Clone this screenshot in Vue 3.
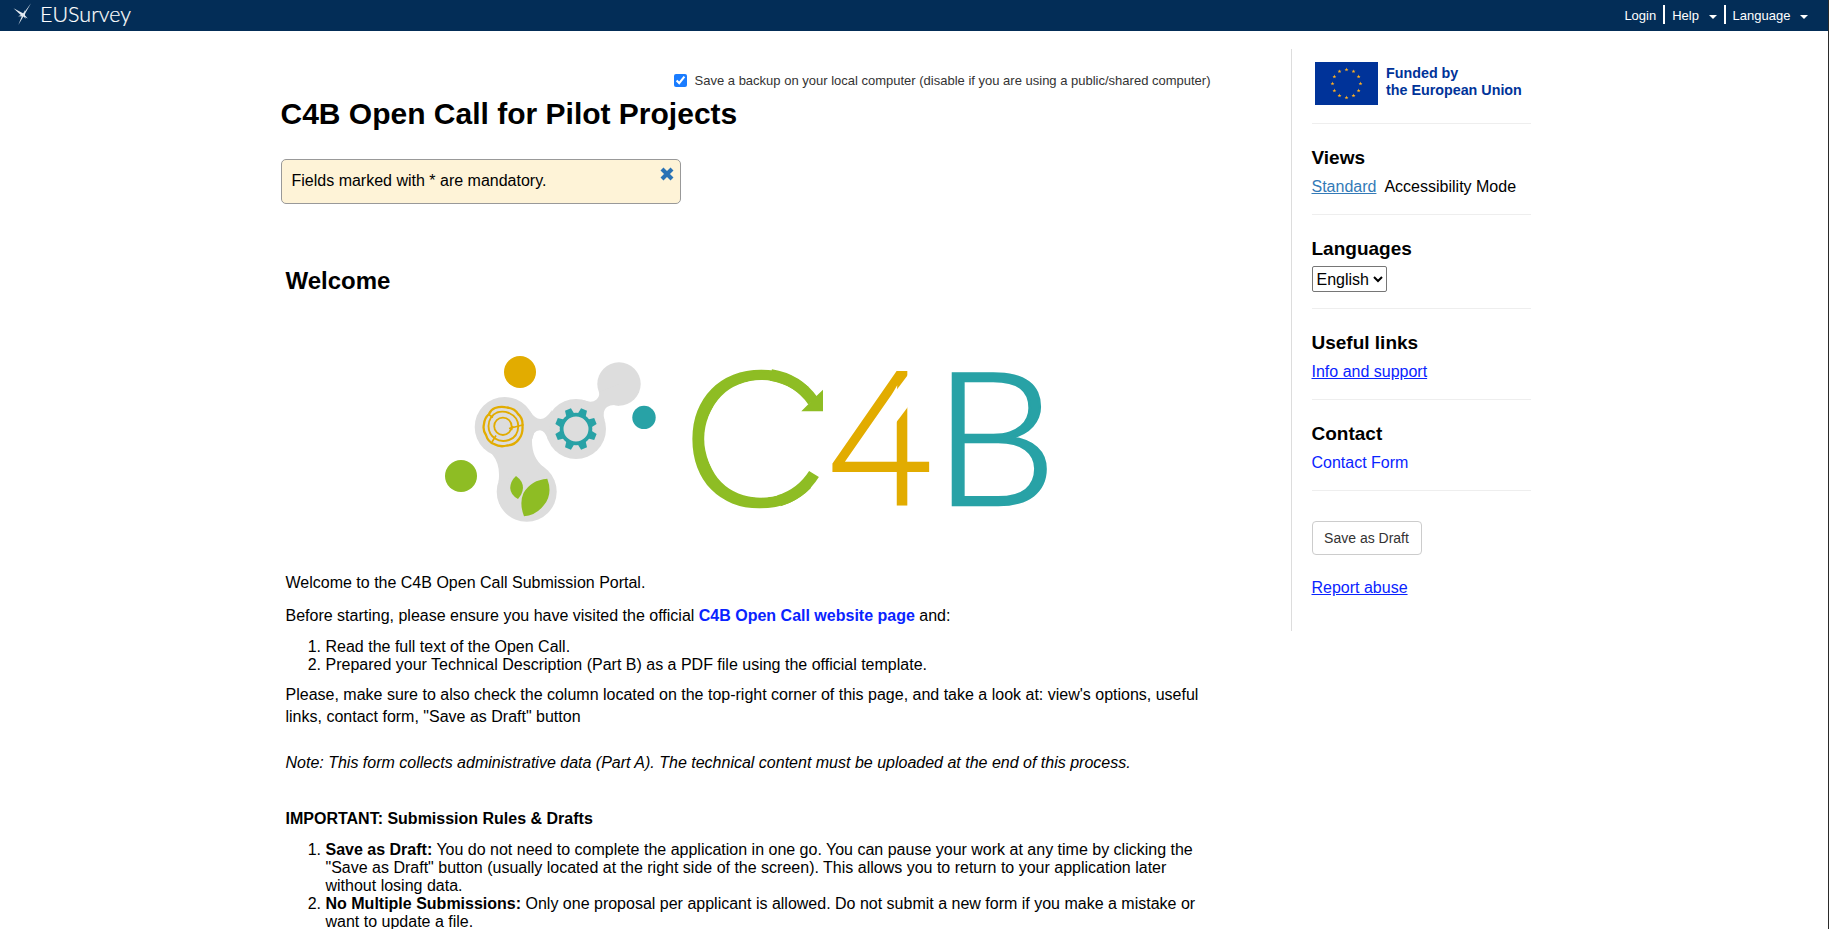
<template>
  <div class="page">
    <header class="topbar">
      <a class="brand">
        <svg class="brand__star" width="20" height="24" viewBox="0 0 20 24">
          <path d="M18 0.300 L10.700 13 L5.300 22 L9.300 12 Z" />
          <path d="M0.500 5.200 L10 10.300 L14.800 15.500 L8 12.300 Z" />
          <path d="M11.700 7 L11.700 11 L12.500 16 L9.800 12 Z" />
          <path d="M5 13.300 L12.500 10.300 L10 13.500 Z" />
        </svg>
        <svg class="brand__name" width="94" height="31" viewBox="0 0 94 31">
          <text x="0" y="22" textLength="91" lengthAdjust="spacingAndGlyphs">EUSurvey</text>
        </svg>
      </a>
      <nav class="topnav">
        <a class="topnav__item">Login</a>
        <a class="topnav__item topnav__item--help">Help <i class="caret"></i></a>
        <a class="topnav__item topnav__item--lang">Language <i class="caret"></i></a>
      </nav>
    </header>

    <div class="layout">
      <main class="survey">
        <label class="backup">
          <input v-model="saveBackup" type="checkbox" />
          <span>Save a backup on your local computer (disable if you are using a public/shared computer)</span>
        </label>
        <h1 class="survey__title">C4B Open Call for Pilot Projects</h1>

        <div v-if="showInfo" class="info">
          <span>Fields marked with * are mandatory.</span>
          <svg class="info__close" width="14" height="14" viewBox="0 0 14 14" @click="showInfo = false">
            <path d="M2 2 L12 12 M12 2 L2 12" />
          </svg>
        </div>

        <section class="section">
          <h2 class="section__title">Welcome</h2>

          <svg class="logo" width="602" height="170" viewBox="0 0 602 170">
            <g fill="#dddddd">
              <circle cx="59.7" cy="73" r="30" />
              <circle cx="131" cy="75" r="30" />
              <circle cx="81.7" cy="137.7" r="30" />
              <circle cx="174" cy="30" r="21.7" />
              <path d="M85 57 Q90 65 95.5 65 Q101 65 107 56 L103 86 Q100 76.5 95 76.3 Q87.5 77 87 86 Q86.500 104 99 113.500 L53.500 128 Q56 111 47 100 Q43 95.500 38 92 L60 73 Z" />
              <path d="M139 46.300 Q147 49.500 151.500 45.500 Q155 42 154 38 L174 30 L174 51.700 Q167 50 162 53 Q157 56.500 159.500 66 L131 75 Z" />
            </g>
            <circle cx="75" cy="18" r="16" fill="#e2ac00" />
            <circle cx="16" cy="122" r="16" fill="#8ebd24" />
            <circle cx="199" cy="63.400" r="11.700" fill="#28a2a6" />
            <!-- wood rings -->
            <g fill="none" stroke="#e2ac00">
              <path stroke-width="2.300" d="M50 54 Q56 52 62 53.500 Q70 54.500 73 60 Q78 64 77.500 72 Q78 80 74 85 Q70 91 62 91.500 Q55 93.500 49 90 Q43 88 41 81 Q37.500 76 39 70 Q39.500 64 44 60 Q46 55.500 50 54 Z" />
              <path stroke-width="1.900" d="M52 58.500 Q58 56.500 64 59 Q73 63 73.300 72 Q73 83 64 86 Q56 88.500 50 84.500 Q43.500 80 43.500 72 Q44 62 52 58.500 Z" />
              <circle cx="57.900" cy="72.300" r="8.700" stroke-width="1.800" />
              <path stroke-width="1.600" d="M64 74.500 L78.500 70.700 M66.500 76 L68 72 M43 60 L48 63.500 M47 88 L51 81.500" />
            </g>
            <!-- gear -->
            <g fill="#28a2a6" transform="translate(131 75)">
              <circle r="14.400" fill="none" stroke="#28a2a6" stroke-width="3.800" />
              <path
                v-for="angle in teeth"
                :key="angle"
                d="M-4.200 -15 L-3.200 -21 H3.200 L4.200 -15 Z"
                :transform="`rotate(${angle})`"
              />
            </g>
            <g fill="#8ebd24">
              <path d="M102.300 124.700 Q108 140 99 151 Q91 161.500 79 162.300 Q74 149 78.500 139 Q86 126 102.300 124.700 Z" />
              <path d="M71 122 Q78 127 78 134 Q77.500 140 73 145 Q65.500 141 65.200 134 Q65.500 127 71 122 Z" />
            </g>
            <g class="logo__letters">
              <text fill="#8ebd24" stroke="#8ebd24" transform="translate(237.200 152.300) scale(1.055 1.008)">C</text>
              <text class="logo__four" fill="#e2ac00" stroke="#e2ac00" transform="translate(384.300 150.700) scale(0.950 0.983)">4</text>
              <text fill="#28a2a6" stroke="#28a2a6" transform="translate(487.500 150.700) scale(1.055 0.990)">B</text>
            </g>
            <!-- slit between the diagonal and the stem -->
            <path fill="#fff" d="M467 15.500 V47.500 L450 70 V38 Z" />
            <!-- arrow: rounded inside, shaft, tail and head -->
            <ellipse cx="316.700" cy="84.700" rx="57.500" ry="58.700" fill="#fff" />
            <path fill="none" stroke="#8ebd24" stroke-width="11.600" d="M326 21.100 A64 64.300 0 0 1 368 47 M334 146.800 A64 64.300 0 0 0 369 120" />
            <path fill="#8ebd24" d="M378 35.700 V57.300 H356.300 L363.300 50.300 L371.700 41.700 Z" />
          </svg>

          <div class="text">
            <p>Welcome to the C4B Open Call Submission Portal.</p>
            <p>Before starting, please ensure you have visited the official <a class="text__link">C4B Open Call website page</a> and:</p>
            <ol>
              <li>Read the full text of the Open Call.</li>
              <li>Prepared your Technical Description (Part B) as a PDF file using the official template.</li>
            </ol>
            <p class="text__hint">Please, make sure to also check the column located on the top-right corner of this page, and take a look at: view's options, useful links, contact form, "Save as Draft" button</p>
            <p class="text__note">Note: This form collects administrative data (Part A). The technical content must be uploaded at the end of this process.</p>
            <p class="text__rules">IMPORTANT: Submission Rules &amp; Drafts</p>
            <ol>
              <li v-for="rule in rules" :key="rule.name"><b>{{ rule.name }}:</b> {{ rule.text }}</li>
            </ol>
          </div>
        </section>
      </main>

      <aside class="side">
        <div class="side__block side__block--eu">
          <svg class="flag" width="63" height="43" viewBox="0 0 63 43">
            <rect width="63" height="43" fill="#003399" />
            <path
              v-for="(star, i) in stars"
              :key="i"
              d="M0 -2 L0.500 -0.600 L2 -0.600 L0.800 0.300 L1.200 1.700 L0 0.900 L-1.200 1.700 L-0.800 0.300 L-2 -0.600 L-0.500 -0.600 Z"
              fill="#ffb020"
              :transform="`translate(${star.x} ${star.y})`"
            />
          </svg>
          <div class="eu">Funded by<br />the European Union</div>
        </div>
        <div class="side__block">
          <h3>Views</h3>
          <div class="views"><a class="views__standard">Standard</a><span>Accessibility Mode</span></div>
        </div>
        <div class="side__block side__block--lang">
          <h3>Languages</h3>
          <select v-model="language" class="lang">
            <option>English</option>
          </select>
        </div>
        <div class="side__block">
          <h3>Useful links</h3>
          <div><a class="link">Info and support</a></div>
        </div>
        <div class="side__block">
          <h3>Contact</h3>
          <div><a class="link link--plain">Contact Form</a></div>
        </div>
        <button class="draft" type="button">Save as Draft</button>
        <div><a class="link">Report abuse</a></div>
      </aside>
    </div>
  </div>
</template>

<script setup>
import { ref } from 'vue'

const saveBackup = ref(true)
const showInfo = ref(true)
const language = ref('English')

const teeth = Array.from({ length: 8 }, (_, i) => 22.5 + i * 45)

const stars = Array.from({ length: 12 }, (_, i) => {
  const a = (i * Math.PI) / 6
  return {
    x: (31.5 + 14 * Math.sin(a)).toFixed(2),
    y: (21.5 - 14 * Math.cos(a)).toFixed(2)
  }
})

const rules = [
  {
    name: 'Save as Draft',
    text: 'You do not need to complete the application in one go. You can pause your work at any time by clicking the "Save as Draft" button (usually located at the right side of the screen). This allows you to return to your application later without losing data.'
  },
  {
    name: 'No Multiple Submissions',
    text: 'Only one proposal per applicant is allowed. Do not submit a new form if you make a mistake or want to update a file.'
  }
]
</script>

<style>
body {
  background: #fff;
  overflow: hidden;
}
</style>

<style scoped>
.page {
  box-sizing: border-box;
  height: 929px;
  overflow: hidden;
  border-right: 1px solid #2b2b2b;
  font-family: "Liberation Sans", Arial, sans-serif;
  font-size: 16px;
  line-height: 22px;
  color: #000;
}

.topbar {
  display: flex;
  justify-content: space-between;
  height: 31px;
  background: #032d57;
  color: #fff;
}

.brand {
  display: flex;
  padding-left: 13px;
}

.brand__star {
  margin-top: 3px;
  fill: #e4ebf2;
}

.brand__name {
  margin-left: 7px;
}

.brand__name text {
  font-family: Lato, sans-serif;
  font-size: 21px;
  font-weight: 300;
  fill: #fff;
  stroke: #fff;
  stroke-width: 0.2;
}

.topnav {
  display: flex;
  padding: 5px 20px 0 0;
  font-size: 13px;
  line-height: 21px;
}

.topnav__item {
  height: 19px;
}

.topnav__item--help,
.topnav__item--lang {
  margin-left: 7px;
  padding-left: 7px;
  border-left: 2px solid #fff;
}

.caret {
  display: inline-block;
  margin-left: 6px;
  vertical-align: middle;
  border-top: 4px solid #fff;
  border-left: 4px solid transparent;
  border-right: 4px solid transparent;
}

.layout {
  display: flex;
  align-items: flex-start;
}

.survey {
  width: 930px;
  padding: 41px 80px 0 280.5px;
}

.backup {
  display: flex;
  align-items: center;
  justify-content: flex-end;
  height: 17px;
  font-size: 13px;
  color: #333;
}

.backup input {
  width: 13px;
  height: 13px;
  margin: 0 8px 0 0;
  accent-color: #1a7cff;
}

.survey__title {
  margin: 7px 0 0;
  font-size: 30px;
  line-height: 36px;
}

.info {
  box-sizing: border-box;
  display: flex;
  justify-content: space-between;
  width: 400px;
  height: 45px;
  margin-top: 27px;
  padding: 10px 6px 0 10px;
  border: 1px solid #999;
  border-radius: 5px;
  background: #fef3d7;
}

.info__close {
  margin-top: -3px;
  stroke: #2a72b5;
  stroke-width: 4.2;
}

.section {
  padding: 63px 5px 0;
}

.section__title {
  margin: 0;
  font-size: 24px;
  line-height: 28px;
}

.logo {
  display: block;
  margin: 59px 0 0 159.5px;
}

.logo__letters text {
  font-family: Lato, sans-serif;
  font-size: 187px;
  font-weight: 300;
  stroke-width: 2.6;
}

.logo__letters .logo__four {
  font-family: "Open Sans", sans-serif;
  stroke-width: 2;
}

.text {
  margin-top: 48px;
}

.text p {
  margin: 0 0 11px;
}

.text ol {
  margin: 0 0 10px;
  padding-left: 40px;
  line-height: 18px;
}

.text__link {
  color: #0a24ff;
  font-weight: bold;
}

.text .text__hint {
  margin-bottom: 24px;
}

.text .text__note {
  margin-bottom: 34px;
  font-style: italic;
}

.text__rules {
  font-weight: bold;
}

.side {
  box-sizing: border-box;
  width: 240.5px;
  height: 582px;
  margin-top: 18px;
  padding-left: 20px;
  border-left: 1px solid #ddd;
}

.side__block {
  box-sizing: border-box;
  height: 91px;
  padding-top: 23px;
  border-bottom: 1px solid #eee;
}

.side__block--eu {
  display: flex;
  height: 75px;
  padding: 13px 0 0 3.5px;
}

.side__block--lang {
  height: 94px;
}

.side h3 {
  margin: 0;
  font-size: 19px;
  line-height: 22px;
}

.side__block h3 + div {
  margin-top: 7px;
}

.eu {
  margin-left: 8px;
  padding-top: 2.5px;
  font-size: 14.3px;
  font-weight: bold;
  line-height: 17.500px;
  color: #003399;
  white-space: nowrap;
}

.views {
  display: flex;
  gap: 8px;
}

.views__standard {
  color: #337ab7;
  text-decoration: underline;
}

.lang {
  display: block;
  width: 75px;
  height: 26px;
  margin-top: 6px;
  padding: 0;
  border: 1px solid #767676;
  border-radius: 2px;
  background: #fff;
  font: 16px "Liberation Sans", Arial, sans-serif;
  color: #000;
}

.link {
  color: #0a24ff;
  text-decoration: underline;
}

.link--plain {
  text-decoration: none;
}

.draft {
  display: block;
  width: 110px;
  height: 34px;
  margin: 30px 0 22px;
  padding: 0;
  border: 1px solid #ccc;
  border-radius: 4px;
  background: #fff;
  font: 14px "Liberation Sans", Arial, sans-serif;
  color: #333;
}
</style>
